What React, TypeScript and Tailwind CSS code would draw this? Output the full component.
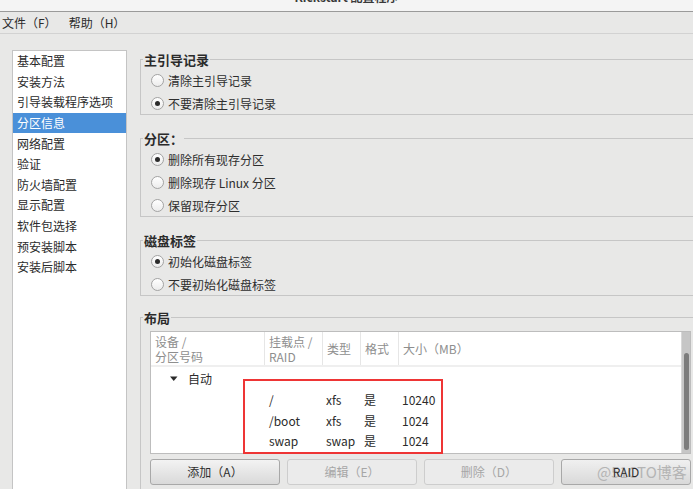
import React from "react";

const items = [
  "基本配置",
  "安装方法",
  "引导装载程序选项",
  "分区信息",
  "网络配置",
  "验证",
  "防火墙配置",
  "显示配置",
  "软件包选择",
  "预安装脚本",
  "安装后脚本",
];

function Radio({ checked, label }: { checked?: boolean; label: string }) {
  return (
    <div className="flex h-[23px] items-center pl-[10px]">
      <span className="flex h-[13px] w-[13px] items-center justify-center rounded-full border border-[#a3a3a3] bg-gradient-to-b from-white to-[#ececec]">
        {checked && <span className="h-[5px] w-[5px] rounded-full bg-[#2b2b2b]" />}
      </span>
      <span className="ml-[4px] text-[12px] leading-none text-[#2e2e2e]">{label}</span>
    </div>
  );
}

function Group({
  title,
  children,
  className = "",
}: {
  title: string;
  children: React.ReactNode;
  className?: string;
}) {
  return (
    <div className={"w-[570px] shrink-0 border-b border-l border-t border-[#c6c6c6] " + className}>
      <div className="-mt-[9px] ml-[2px] h-[17px] w-fit bg-[#e8e8e7] px-px text-[13px] font-semibold leading-[17px] text-[#2b2b2b]">
        {title}
      </div>
      {children}
    </div>
  );
}

export default function App() {
  return (
    <div className="h-[489px] w-[693px] overflow-hidden bg-[#e8e8e7] font-['Noto_Sans_CJK_SC','Noto_Sans',sans-serif] text-[#2b2b2b]">
      {/* title bar */}
      <div className="h-[12px] overflow-hidden border-b border-[#9a9a9a] bg-[#f4f4f4]">
        <div className="-mt-[9px] text-center text-[12px] font-bold leading-[12px] text-[#3a3a3a]">
          Kickstart 配置程序
        </div>
      </div>
      {/* menu bar */}
      <div className="flex h-[22px] items-center gap-[12px] border-b border-[#d2d2d2] pl-[2px] text-[12px] text-[#2b2b2b]">
        <span>文件（F）</span>
        <span>帮助（H）</span>
      </div>
      {/* body */}
      <div className="flex w-[720px]">
        <div className="ml-[12px] mt-[16px] h-[460px] w-[115px] shrink-0 border border-[#c4c4c4] bg-white">
          {items.map((it, i) => (
            <div
              key={it}
              className={
                "flex h-[20.6px] items-center whitespace-nowrap pl-[4px] text-[12px] " +
                (i === 3 ? "bg-[#4a90d9] text-white" : "text-[#2b2b2b]")
              }
            >
              {it}
            </div>
          ))}
        </div>
        <div className="ml-[13px] flex shrink-0 flex-col pt-[25px]">
          <Group title="主引导记录">
            <div className="-mb-px pt-[1px]">
              <Radio label="清除主引导记录" />
              <Radio checked label="不要清除主引导记录" />
            </div>
          </Group>
          <Group title="分区：" className="mt-[23px]">
            <div className="-mb-px pt-[1px]">
              <Radio checked label="删除所有现存分区" />
              <Radio label="删除现存  Linux 分区" />
              <Radio label="保留现存分区" />
            </div>
          </Group>
          <Group title="磁盘标签" className="mt-[23px]">
            <div className="-mb-px pt-[1px]">
              <Radio checked label="初始化磁盘标签" />
              <Radio label="不要初始化磁盘标签" />
            </div>
          </Group>
          <Group title="布局" className="mt-[21px] h-[200px]">
            <div className="pl-[9px] pt-[5px]">
              <div className="relative flex h-[123px] w-[541px] border border-[#bdbdbd] bg-white">
                <div className="flex-1">
                  <div className="grid h-[35px] grid-cols-[113px_58px_38px_38px_1fr] border-b-2 border-[#efefef] text-[12px] leading-[15px] text-[#8e8e8e]">
                    <div className="flex flex-col justify-center pl-[4px]">
                      <span>设备 /</span>
                      <span>分区号码</span>
                    </div>
                    <div className="flex flex-col justify-center border-l border-[#e6e6e6] pl-[4px]">
                      <span>挂载点 /</span>
                      <span>RAID</span>
                    </div>
                    <div className="flex items-center border-l border-[#e6e6e6] pl-[4px]">类型</div>
                    <div className="flex items-center border-l border-[#e6e6e6] pl-[4px]">格式</div>
                    <div className="flex items-center border-l border-[#e6e6e6] pl-[4px]">大小（MB）</div>
                  </div>
                  <div className="pt-[2px] text-[12px] text-[#2b2b2b]">
                    <div className="flex h-[20.7px] items-center pl-[19px]">
                      <svg width="8" height="6" viewBox="0 0 8 6" className="mr-[10px]">
                        <path d="M0 0.5 L7.5 0.5 L3.75 5 Z" fill="#2b2b2b" />
                      </svg>
                      <span>自动</span>
                    </div>
                    {[
                      ["/", "xfs", "是", "10240"],
                      ["/boot", "xfs", "是", "1024"],
                      ["swap", "swap", "是", "1024"],
                    ].map((r) => (
                      <div
                        key={r[0]}
                        className="grid h-[20.7px] grid-cols-[113px_58px_38px_38px_1fr] items-center"
                      >
                        <span />
                        <span className="pl-[5px]">{r[0]}</span>
                        <span className="pl-[4px]">{r[1]}</span>
                        <span className="pl-[4px]">{r[2]}</span>
                        <span className="pl-[4px]">{r[3]}</span>
                      </div>
                    ))}
                  </div>
                </div>
                <div className="w-[9px] border-l border-[#d8d8d8] bg-[#c6c6c6] pl-[2px] pt-[21px]">
                  <div className="h-[97px] w-[5px] rounded-full bg-[#7c7c7c]" />
                </div>
                <div className="absolute left-[92px] top-[47px] h-[75px] w-[200px] border-2 border-[#ee3535]" />
              </div>
              <div className="mt-[5px] grid w-[541px] grid-cols-4 gap-[7px] text-[12px]">
                <div className="flex h-[26px] items-center justify-center rounded-[3px] border border-[#a8a8a8] bg-gradient-to-b from-[#f3f3f3] to-[#d9d9d9] text-[#2e2e2e]">
                  添加（A）
                </div>
                <div className="flex h-[26px] items-center justify-center rounded-[3px] border border-[#cdcdcd] bg-[#ebebeb] text-[#a6a6a6]">
                  编辑（E）
                </div>
                <div className="flex h-[26px] items-center justify-center rounded-[3px] border border-[#cdcdcd] bg-[#ebebeb] text-[#a6a6a6]">
                  删除（D）
                </div>
                <div className="relative flex h-[26px] items-center justify-center rounded-[3px] border border-[#a8a8a8] bg-gradient-to-b from-[#f0f0f0] to-[#d9d9d9] text-[#2e2e2e]">
                  <span className="absolute left-[35px] top-[2px] whitespace-nowrap text-[15px] leading-[20px] text-[#b4b4b4]">
                    @51CTO博客
                  </span>
                  <span className="relative">RAID</span>
                </div>
              </div>
            </div>
          </Group>
        </div>
      </div>
    </div>
  );
}
